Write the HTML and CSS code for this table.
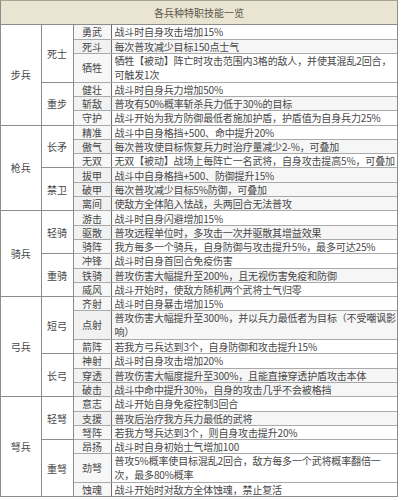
FILE: index.html
```html
<!DOCTYPE html>
<html lang="zh">
<head>
<meta charset="utf-8">
<title>各兵种特职技能一览</title>
<link rel="stylesheet" href="styles.css">
</head>
<body>
<div class="sheet">
  <div class="title">各兵种特职技能一览</div>
  <table class="grid">
    <colgroup>
      <col class="c1"><col class="c2"><col class="c3"><col>
    </colgroup>
    <tbody>
      <tr class="s grp"><td class="arm" rowspan="6">步兵</td><td class="job" rowspan="3">死士</td><td class="sk">勇武</td><td class="ds">战斗时自身攻击增加15%</td></tr>
      <tr class="s alt"><td class="sk">死斗</td><td class="ds">每次普攻减少目标150点士气</td></tr>
      <tr class="d"><td class="sk">牺牲</td><td class="ds">牺牲【被动】阵亡时攻击范围内3格的敌人，并使其混乱2回合，<br>可触发1次</td></tr>
      <tr class="s"><td class="job" rowspan="3">重步</td><td class="sk">健壮</td><td class="ds">战斗时自身兵力增加50%</td></tr>
      <tr class="s alt"><td class="sk">斩敌</td><td class="ds">普攻有50%概率斩杀兵力低于30%的目标</td></tr>
      <tr class="s"><td class="sk">守护</td><td class="ds">战斗开始为我方防御最低者施加护盾，护盾值为自身兵力25%</td></tr>

      <tr class="s grp"><td class="arm" rowspan="6">枪兵</td><td class="job" rowspan="3">长矛</td><td class="sk">精准</td><td class="ds">战斗中自身格挡+500、命中提升20%</td></tr>
      <tr class="s alt"><td class="sk">傲气</td><td class="ds">每次普攻使目标恢复兵力时治疗量减少2-%，可叠加</td></tr>
      <tr class="s"><td class="sk">无双</td><td class="ds">无双【被动】战场上每阵亡一名武将，自身攻击提高5%，可叠加</td></tr>
      <tr class="s alt"><td class="job" rowspan="3">禁卫</td><td class="sk">拔甲</td><td class="ds">战斗中自身格挡+500、防御提升15%</td></tr>
      <tr class="s alt"><td class="sk">破甲</td><td class="ds">每次普攻减少目标5%防御，可叠加</td></tr>
      <tr class="s alt"><td class="sk">离间</td><td class="ds">使敌方全体陷入怯战，头两回合无法普攻</td></tr>

      <tr class="s grp"><td class="arm" rowspan="6">骑兵</td><td class="job" rowspan="3">轻骑</td><td class="sk">游击</td><td class="ds">战斗时自身闪避增加15%</td></tr>
      <tr class="s alt"><td class="sk">驱散</td><td class="ds">普攻远程单位时，多攻击一次并驱散其增益效果</td></tr>
      <tr class="s"><td class="sk">骑阵</td><td class="ds">我方每多一个骑兵，自身防御与攻击提升5%，最多可达25%</td></tr>
      <tr class="s"><td class="job" rowspan="3">重骑</td><td class="sk">冲锋</td><td class="ds">战斗时自身首回合免疫伤害</td></tr>
      <tr class="s alt"><td class="sk">铁骑</td><td class="ds">普攻伤害大幅提升至200%，且无视伤害免疫和防御</td></tr>
      <tr class="s"><td class="sk">威风</td><td class="ds">战斗开始时，使敌方随机两个武将士气归零</td></tr>

      <tr class="s grp"><td class="arm" rowspan="6">弓兵</td><td class="job" rowspan="3">短弓</td><td class="sk">齐射</td><td class="ds">战斗时自身暴击增加15%</td></tr>
      <tr class="d alt"><td class="sk">点射</td><td class="ds">普攻伤害大幅提升至300%，并以兵力最低者为目标（不受嘲讽影<br>响）</td></tr>
      <tr class="s"><td class="sk">箭阵</td><td class="ds">若我方弓兵达到3个，自身防御和攻击提升15%</td></tr>
      <tr class="s"><td class="job" rowspan="3">长弓</td><td class="sk">神射</td><td class="ds">战斗时自身攻击增加20%</td></tr>
      <tr class="s alt"><td class="sk">穿透</td><td class="ds">普攻伤害大幅度提升至300%，且能直接穿透护盾攻击本体</td></tr>
      <tr class="s alt"><td class="sk">破击</td><td class="ds">战斗中命中提升30%，自身的攻击几乎不会被格挡</td></tr>

      <tr class="s grp"><td class="arm" rowspan="6">弩兵</td><td class="job" rowspan="3">轻弩</td><td class="sk">意志</td><td class="ds">战斗开始自身免疫控制3回合</td></tr>
      <tr class="s alt"><td class="sk">支援</td><td class="ds">普攻后治疗我方兵力最低的武将</td></tr>
      <tr class="s"><td class="sk">弩阵</td><td class="ds">若我方弩兵达到3个，则自身攻击提升20%</td></tr>
      <tr class="s"><td class="job" rowspan="3">重弩</td><td class="sk">昂扬</td><td class="ds">战斗时自身初始士气增加100</td></tr>
      <tr class="d"><td class="sk">劲弩</td><td class="ds">普攻5%概率使目标混乱2回合，敌方每多一个武将概率翻倍一<br>次，最多80%概率</td></tr>
      <tr class="s"><td class="sk">蚀魂</td><td class="ds">战斗开始时对敌方全体蚀魂，禁止复活</td></tr>
    </tbody>
  </table>
</div>
</body>
</html>
```

FILE: styles.css
```css
html, body {
  margin: 0;
  padding: 0;
  background: #ffffff;
}

body {
  font-family: "Noto Sans CJK SC", "Noto Sans", sans-serif;
  font-size: 10px;
  color: #474747;
}

.sheet {
  width: 398px;
  box-sizing: border-box;
  border-left: 1px solid #8c8c8c;
  border-right: 1px solid #8c8c8c;
  border-top: 1px solid #a8a49a;
}

.title {
  height: 23px;
  line-height: 23px;
  text-align: center;
  background: #e9e5d2;
  color: #5a554c;
  font-size: 10px;
  border-bottom: 1px solid #8c8c8c;
}

.grid {
  width: 100%;
  border-collapse: collapse;
  table-layout: fixed;
}

.c1 { width: 40px; }
.c2 { width: 32px; }
.c3 { width: 38px; }

.grid td {
  padding: 0;
  border: 1px solid #a9a9a9;
  line-height: 13px;
  vertical-align: middle;
}

.grid tr:first-child td {
  border-top: none;
}

.grid td:first-child {
  border-left: none;
}

.grid tr.s {
  height: 14.3px;
}

.grid tr.d {
  height: 28.6px;
}

.grid tr.d td {
  line-height: 13.8px;
}

.grid tr.grp td {
  border-top-color: #8c8c8c;
}

.arm {
  text-align: center;
  background: #ffffff;
  border-color: #8c8c8c !important;
}

.job {
  text-align: center;
  background: #ffffff;
  border-color: #8c8c8c !important;
}

.sk {
  text-align: center;
  background: #f7f7f7;
  border-right-color: #6e6e6e !important;
}

.ds {
  padding-left: 3px !important;
  white-space: nowrap;
  overflow: hidden;
  letter-spacing: -0.15px;
  background: #ffffff;
  border-right: none !important;
}

.grid tr.alt .ds {
  background: #f6f6f6;
}

.grid tr.alt .sk {
  background: #f1f1f1;
}

.grid tr:last-child td {
  border-bottom: 1px solid #8c8c8c;
}
```
